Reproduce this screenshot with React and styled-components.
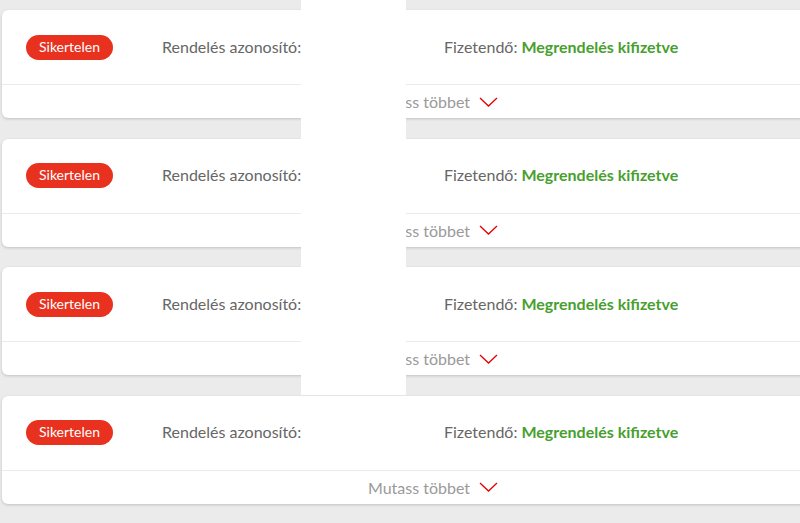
import styled, { createGlobalStyle } from 'styled-components';

const GlobalStyle = createGlobalStyle`
  html, body {
    margin: 0;
    padding: 0;
    background: #ebebeb;
    overflow: hidden;
  }
  body {
    font-family: Lato, 'Open Sans', sans-serif;
  }
`;

const Page = styled.div`
  position: relative;
  width: 800px;
  height: 523px;
  overflow: hidden;
  padding: 10px 0 0 2px;
  box-sizing: border-box;
  display: flex;
  flex-direction: column;
  gap: 20.6px;
`;

const Card = styled.div`
  width: 862px;
  flex-shrink: 0;
  background: #ffffff;
  border-radius: 6px;
  box-shadow: 0 1px 3px rgba(0, 0, 0, 0.18);
`;

const Summary = styled.div`
  height: 74px;
  display: grid;
  grid-template-columns: 136px 282px 1fr;
  align-items: center;
  padding-left: 24px;
  border-bottom: 1px solid #ebebeb;
`;

const Badge = styled.span`
  justify-self: start;
  height: 25px;
  line-height: 24px;
  padding: 0 13px;
  border-radius: 13px;
  background: #e8321f;
  color: #ffffff;
  font-size: 14px;
`;

const Label = styled.span`
  color: #666666;
  font-size: 16px;
  line-height: 20px;
  margin-top: -1px;
`;

const Status = styled.strong`
  color: #47a02e;
  font-weight: 700;
  margin-left: 4px;
`;

const Footer = styled.button`
  width: 100%;
  height: 33px;
  border: none;
  background: transparent;
  display: flex;
  align-items: center;
  justify-content: center;
  gap: 9px;
  font-family: inherit;
  font-size: 16px;
  color: #9a9a9a;
  padding: 0;
  cursor: pointer;
`;

const Chevron = () => (
  <svg width="19" height="10" viewBox="0 0 19 10" fill="none">
    <path d="M1 1l8.5 8 8.5-8" stroke="#e60000" strokeWidth="1.3" />
  </svg>
);

const Overlay = styled.div`
  position: absolute;
  left: 301px;
  top: 0;
  width: 105px;
  height: 395px;
  background: #ffffff;
`;

const orders = [1, 2, 3, 4];

const App = () => (
  <>
    <GlobalStyle />
    <Page>
      {orders.map((id) => (
        <Card key={id}>
          <Summary>
            <Badge>Sikertelen</Badge>
            <Label>Rendelés azonosító:</Label>
            <Label>
              Fizetendő:<Status>Megrendelés kifizetve</Status>
            </Label>
          </Summary>
          <Footer>
            Mutass többet
            <Chevron />
          </Footer>
        </Card>
      ))}
      <Overlay />
    </Page>
  </>
);

export default App;
